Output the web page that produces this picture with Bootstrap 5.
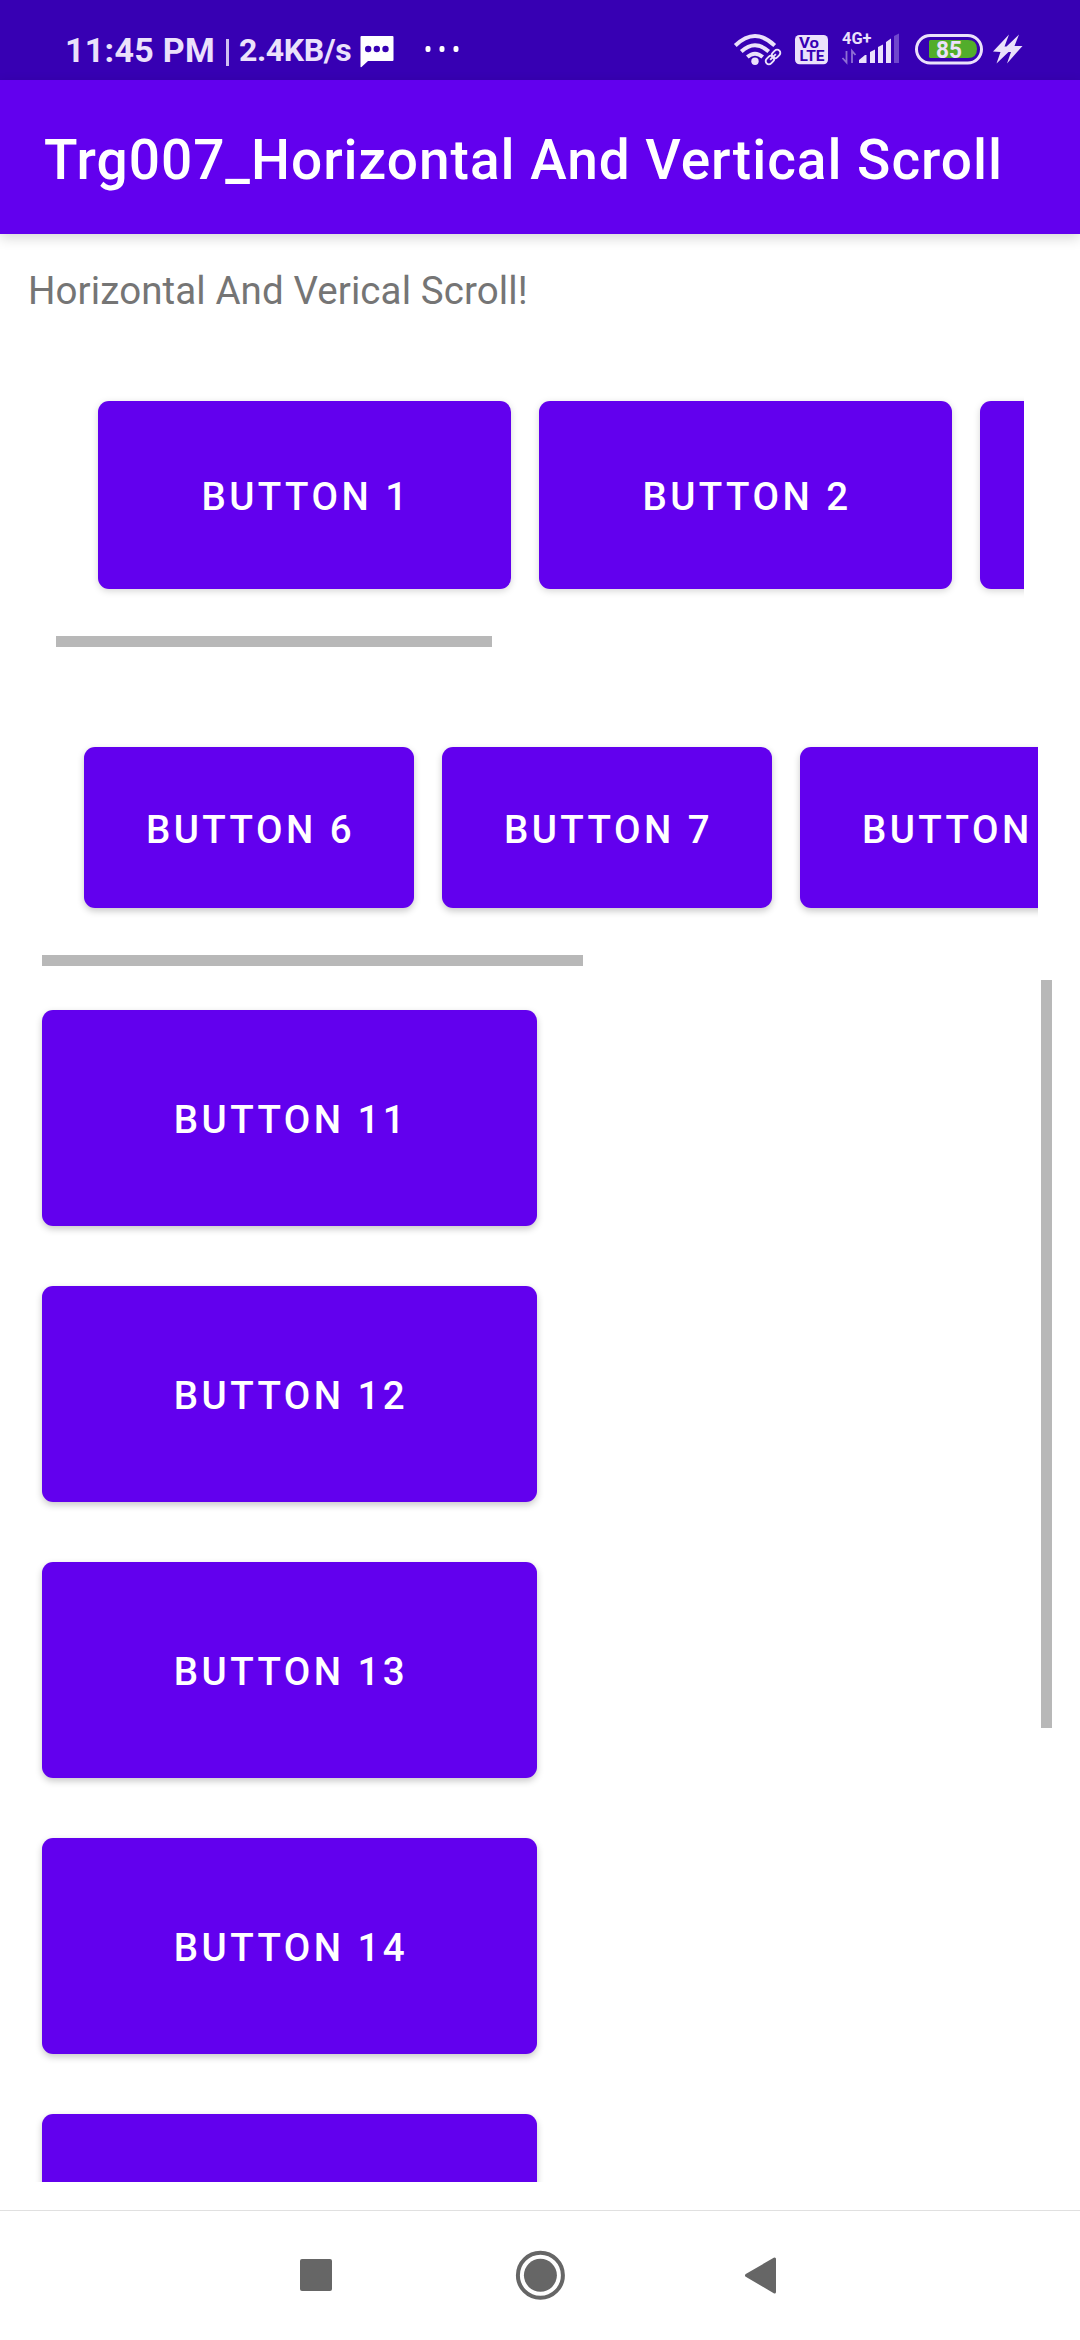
<!DOCTYPE html>
<html lang="en">
<head>
<meta charset="utf-8">
<meta name="viewport" content="width=device-width, initial-scale=1">
<title>Trg007_Horizontal And Vertical Scroll</title>
<link rel="stylesheet" href="https://cdn.jsdelivr.net/npm/bootstrap@5.3.0/dist/css/bootstrap.min.css">
<style>
  body { width: 1080px; height: 2340px; font-family: Roboto, sans-serif; background: #fff; }
  svg { display: block; flex: none; }
  .status-bar { height: 80px; background: #3700b3; color: #ebe1fb; padding: 0 57px 0 65px; flex: none; }
  .status-bar svg text { font-family: Roboto, sans-serif; font-weight: 700; }
  .clock { width: 161px; flex: none; font-size: 34px; line-height: 40px; font-weight: 700; letter-spacing: .3px; padding-top: 30px; }
  .net-speed { width: 124px; flex: none; font-size: 32px; line-height: 40px; font-weight: 700; letter-spacing: -.4px; padding: 30px 0 0 10.5px; }
  .divider-bar { width: 2.5px; flex: none; height: 27px; background: #cfc0f2; margin-top: 39px; }
  .app-bar { height: 154px; background: #6200ee; padding: 0 44px; box-shadow: 0 4px 12px rgba(0,0,0,.16); z-index: 1; flex: none; }
  .app-title { font-size: 55px; line-height: 64px; font-weight: 500; letter-spacing: .98px; color: #fff; padding-top: 6px; }
  .caption-text { font-size: 38.5px; line-height: 46px; letter-spacing: .1px; color: #757575; margin: 34px 0 0 28px; }
  .scroll-one { margin: 31px 56px 0 56px; height: 302px; }
  .scroll-two { margin: 51px 42px 0 42px; height: 268px; }
  .scroll-one .track { padding: 56px 42px 47px; gap: 28px; }
  .scroll-two .track { padding: 49px 42px 47px; gap: 28px; }
  .thumb { background: #b8b8b8; height: 11px; }
  .btn.btn-purple { --bs-btn-color: #fff; --bs-btn-bg: #6200ee; --bs-btn-border-width: 0; --bs-btn-border-radius: 11px;
    flex: none; padding: 3px 0 0 3px; font-size: 38.5px; line-height: 46px; font-weight: 500; letter-spacing: 3.44px;
    text-transform: uppercase; box-shadow: 0 3px 7px rgba(0,0,0,.22); }
  .scroll-one .btn { width: 413px; height: 188px; box-shadow: 0 2px 7px rgba(0,0,0,.17); }
  .scroll-two .btn { width: 330px; height: 161px; padding-top: 4px; }
  .scroll-three { margin: 14px 28px 28px 14px; flex: none; height: 1202px; }
  .scroll-three .column-list { padding: 30px 28px 0; gap: 60px; }
  .scroll-three .btn { width: 495px; height: 216px; }
  .thumb-v { width: 11px; height: 748px; background: #b8b8b8; flex: none; }
  .nav-keys { height: 130px; border-top: 1px solid #e0e0e0; flex: none; }
</style>
</head>
<body class="d-flex flex-column overflow-hidden m-0">

<header class="status-bar d-flex align-items-start justify-content-between">
  <div class="d-flex align-items-start">
    <span class="clock text-nowrap">11:45 PM</span>
    <span class="divider-bar"></span>
    <span class="net-speed text-nowrap">2.4KB/s</span>
    <svg width="120" height="80" viewBox="352.500 0 120 80">
      <path fill="#fff" d="M361 36h31q1 0 1 1v23q0 1-1 1h-24.500l-6.500 6q-1 .5-1-.5V37q0-1 1-1z"/>
      <g fill="#3700b3"><circle cx="367.700" cy="49" r="3.200"/><circle cx="376.300" cy="49" r="3.200"/><circle cx="385" cy="49" r="3.200"/></g>
      <g fill="#fff"><rect x="425" y="46" width="5" height="6" rx="2"/><rect x="439" y="46" width="5" height="6" rx="2"/><rect x="453" y="46" width="5" height="6" rx="2"/></g>
    </svg>
  </div>
  <svg width="293" height="80" viewBox="730 0 293 80">
    <!-- wifi with link -->
    <g fill="none" stroke="#ebe1fb">
      <path stroke-width="4" d="M735.300 45.500Q755 26.500 774.700 45.500"/>
      <path stroke-width="4" d="M741.300 51.500Q755 39 768.700 51.500"/>
      <path stroke-width="4" d="M747.300 57Q755 50.500 762.700 57"/>
      <g stroke-width="1.900" transform="rotate(-45 773 57)">
        <rect x="764" y="53.800" width="9.500" height="6.400" rx="3.200"/>
        <rect x="772.500" y="53.800" width="9.500" height="6.400" rx="3.200"/>
        <path d="M769 57h8"/>
      </g>
    </g>
    <circle cx="755" cy="61.200" r="3.700" fill="#ebe1fb"/>
    <!-- VoLTE -->
    <rect x="795" y="35" width="33" height="29.300" rx="4.500" fill="#ebe1fb"/>
    <text x="799" y="47.500" font-size="14" fill="#3700b3" textLength="20" lengthAdjust="spacingAndGlyphs">Vo</text>
    <text x="799.500" y="61" font-size="14" fill="#3700b3" textLength="25" lengthAdjust="spacingAndGlyphs">LTE</text>
    <!-- mobile signal -->
    <text x="842" y="44" font-size="16" fill="#ebe1fb" textLength="29.500" lengthAdjust="spacingAndGlyphs">4G+</text>
    <g fill="none" stroke="#8f6fd4" stroke-width="1.800"><path d="M846.500 51v11.500l-4-4.500M852 63V51l3.500 4"/></g>
    <g fill="#ebe1fb">
      <path d="M859 63v-3l6-5h1.500v8z"/>
      <path d="M870 63V52l5-2.500V63zM878 63V47l5-2.500V63zM886 63V42l5-3.500V63z"/>
      <path fill="#7047cd" d="M894 63V36l5-2.500V63z"/>
    </g>
    <!-- battery -->
    <rect x="916.500" y="35.500" width="65" height="27.500" rx="13.700" fill="none" stroke="#ebe1fb" stroke-width="3"/>
    <path fill="#52ad2b" d="M930.500 40H968q9 0 9 9t-9 9h-37.500q-1.500 0-1.500-1.500v-15q0-1.500 1.500-1.500z"/>
    <text x="936" y="57.500" font-size="24" fill="#ebe1fb" textLength="26" lengthAdjust="spacingAndGlyphs">85</text>
    <!-- charging bolts -->
    <path fill="#ebe1fb" d="M1009 34.500L993 51.500L1000.500 52L996.500 63.500L1008.500 52L1011 52L1007 63.500L1022.500 46L1014.500 46L1019 34.500L1006.500 46.500L1004.500 46.500Z"/>
  </svg>
</header>

<nav class="app-bar d-flex align-items-center position-relative">
  <h1 class="app-title m-0 text-nowrap">Trg007_Horizontal And Vertical Scroll</h1>
</nav>

<main class="flex-grow-1 d-flex flex-column">
  <p class="caption-text text-nowrap">Horizontal And Verical Scroll!</p>

  <section class="scroll-one overflow-hidden">
    <div class="track d-flex">
      <button class="btn btn-purple" type="button">Button 1</button>
      <button class="btn btn-purple" type="button">Button 2</button>
      <button class="btn btn-purple" type="button"></button>
    </div>
    <div class="thumb" style="width:436px"></div>
  </section>

  <section class="scroll-two overflow-hidden">
    <div class="track d-flex">
      <button class="btn btn-purple" type="button">Button 6</button>
      <button class="btn btn-purple" type="button">Button 7</button>
      <button class="btn btn-purple" type="button">Button 8</button>
    </div>
    <div class="thumb" style="width:541px"></div>
  </section>

  <section class="scroll-three d-flex justify-content-between align-items-start overflow-hidden">
    <div class="column-list d-flex flex-column">
      <button class="btn btn-purple" type="button">Button 11</button>
      <button class="btn btn-purple" type="button">Button 12</button>
      <button class="btn btn-purple" type="button">Button 13</button>
      <button class="btn btn-purple" type="button">Button 14</button>
      <button class="btn btn-purple" type="button"></button>
    </div>
    <div class="thumb-v"></div>
  </section>
</main>

<footer class="nav-keys d-flex justify-content-center">
  <svg width="480" height="129" viewBox="300 2211 480 129" fill="#666">
    <rect x="300" y="2259" width="32" height="32" rx="2"/>
    <circle cx="540.400" cy="2275.300" r="22.500" fill="none" stroke="#666" stroke-width="4"/>
    <circle cx="540.400" cy="2275.300" r="16.500"/>
    <path stroke="#666" stroke-width="3" stroke-linejoin="round" d="M746.500 2275.400L774.500 2259V2292Z"/>
  </svg>
</footer>

<script src="https://cdn.jsdelivr.net/npm/bootstrap@5.3.0/dist/js/bootstrap.bundle.min.js"></script>
</body>
</html>
